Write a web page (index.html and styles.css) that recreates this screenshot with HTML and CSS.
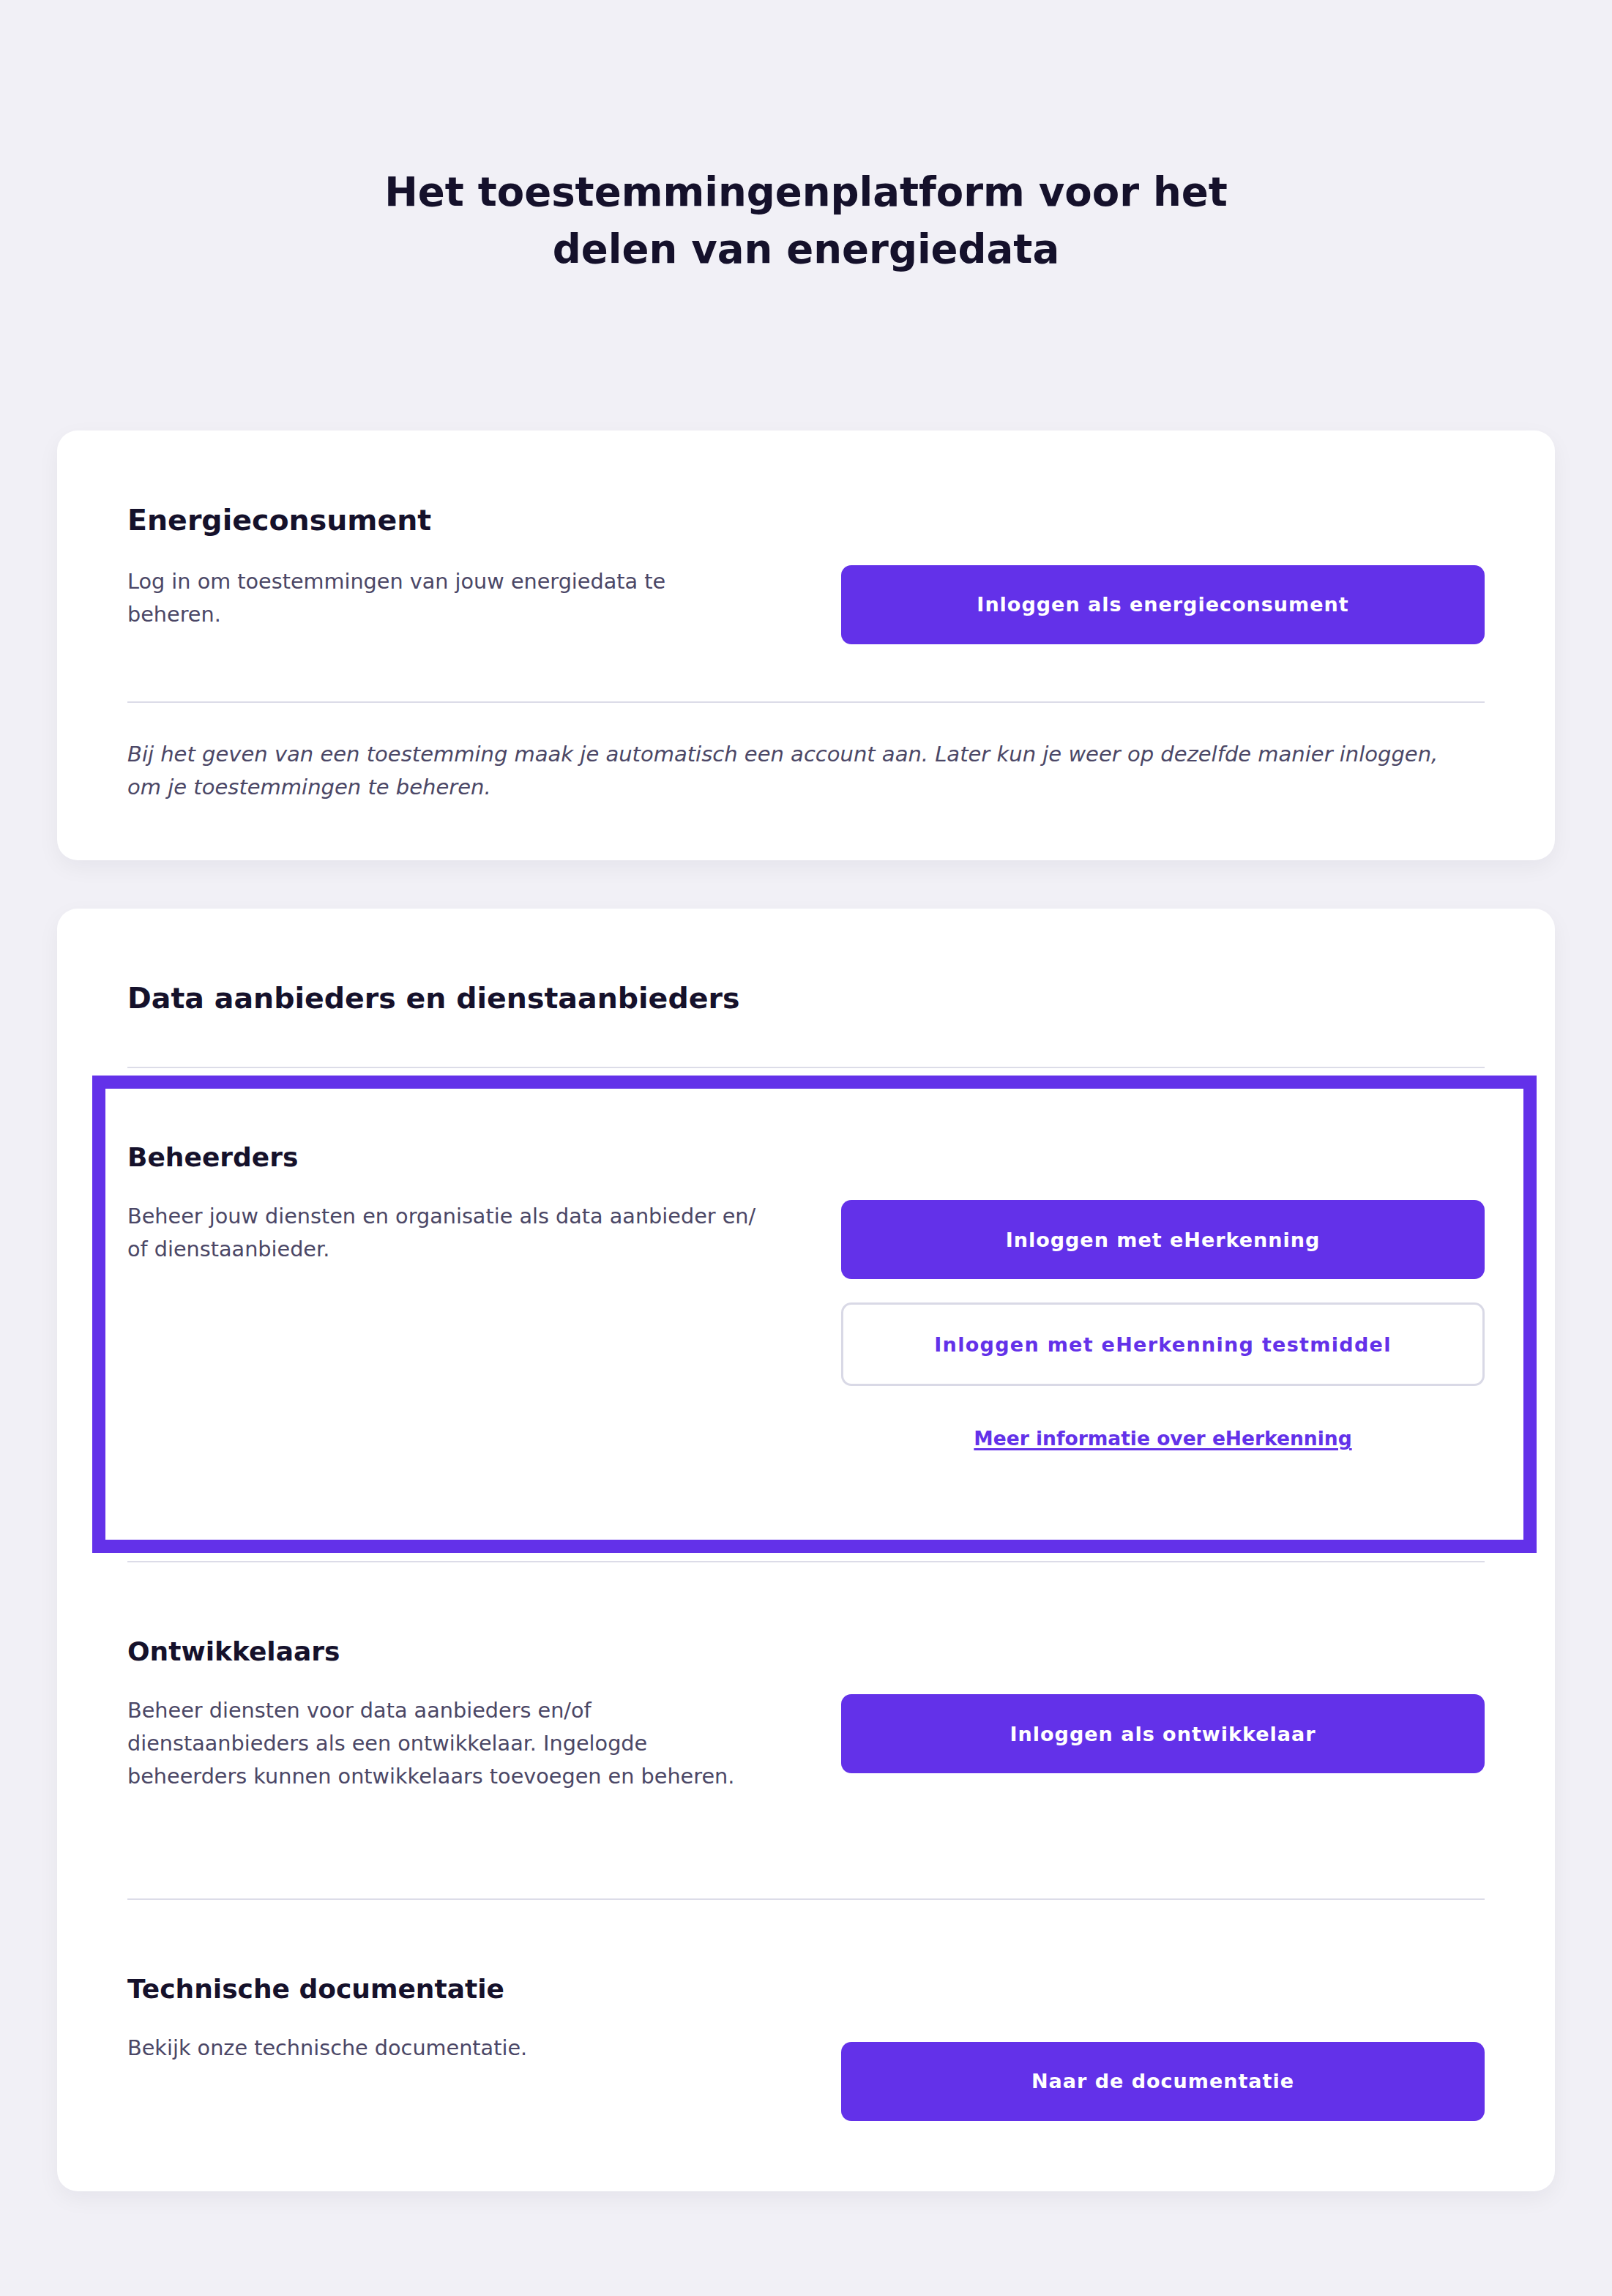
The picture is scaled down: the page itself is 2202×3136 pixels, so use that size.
FILE: index.html
```html
<!DOCTYPE html>
<html lang="nl">
<head>
    <meta charset="UTF-8">
    <meta name="viewport" content="width=device-width, initial-scale=1.0">
    <title>Toestemmingenplatform energiedata</title>
    <link rel="stylesheet" href="styles.css">
</head>
<body>
    <main class="page">
        <h1 class="page-title">Het toestemmingenplatform voor het delen van energiedata</h1>

        <section class="card card-consumer">
            <h2 class="card-title">Energieconsument</h2>
            <div class="row">
                <p class="text">Log in om toestemmingen van jouw energiedata te beheren.</p>
                <div class="actions">
                    <a href="#" class="btn btn-primary">Inloggen als energieconsument</a>
                </div>
            </div>
            <hr class="divider divider-consumer">
            <p class="note">Bij het geven van een toestemming maak je automatisch een account aan. Later kun je weer op dezelfde manier inloggen, om je toestemmingen te beheren.</p>
        </section>

        <section class="card card-providers">
            <h2 class="card-title">Data aanbieders en dienstaanbieders</h2>
            <hr class="divider divider-providers">

            <div class="block block-highlight">
                <h3 class="block-title">Beheerders</h3>
                <div class="row">
                    <p class="text">Beheer jouw diensten en organisatie als data aanbieder en/<wbr>of dienstaanbieder.</p>
                    <div class="actions">
                        <a href="#" class="btn btn-primary">Inloggen met eHerkenning</a>
                        <a href="#" class="btn btn-outline">Inloggen met eHerkenning testmiddel</a>
                        <a href="#" class="link">Meer informatie over eHerkenning</a>
                    </div>
                </div>
            </div>

            <hr class="divider">

            <div class="block block-developers">
                <h3 class="block-title">Ontwikkelaars</h3>
                <div class="row">
                    <p class="text">Beheer diensten voor data aanbieders en/of dienstaanbieders als een ontwikkelaar. Ingelogde beheerders kunnen ontwikkelaars toevoegen en beheren.</p>
                    <div class="actions">
                        <a href="#" class="btn btn-primary">Inloggen als ontwikkelaar</a>
                    </div>
                </div>
            </div>

            <hr class="divider">

            <div class="block block-docs">
                <h3 class="block-title">Technische documentatie</h3>
                <div class="row">
                    <p class="text">Bekijk onze technische documentatie.</p>
                    <div class="actions">
                        <a href="#" class="btn btn-primary">Naar de documentatie</a>
                    </div>
                </div>
            </div>
        </section>
    </main>
</body>
</html>
```

FILE: styles.css
```css
:root {
    --page-background: #f1f0f6;
    --card-background: #ffffff;
    --heading-color: #15112b;
    --text-color: #4b4766;
    --primary: #6331e9;
    --divider: #dcdce8;
    --outline-border: #d9d9e6;
}

body {
    margin: 0;
    background-color: var(--page-background);
    font-family: "DejaVu Sans", Verdana, sans-serif;
    color: var(--text-color);
}

.page {
    padding: 223px 78px 144px;
}

.page-title {
    max-width: 1240px;
    margin: 0 auto 208px;
    text-align: center;
    color: var(--heading-color);
    font-size: 54.5px;
    line-height: 78.4px;
    font-weight: 700;
}

.card {
    background-color: var(--card-background);
    border-radius: 28px;
    padding: 96px;
    box-shadow: 0 10px 30px rgba(21, 17, 43, 0.05);
}

.card-consumer {
    padding-bottom: 78px;
}

.card-providers {
    margin-top: 66px;
}

.card-title {
    margin: 0 0 36px;
    color: var(--heading-color);
    font-size: 39.5px;
    line-height: 52px;
    font-weight: 700;
}

.block-title {
    margin: 0 0 32px;
    color: var(--heading-color);
    font-size: 36px;
    line-height: 52px;
    font-weight: 700;
}

.row {
    display: grid;
    grid-template-columns: 1fr 1fr;
    column-gap: 96px;
    align-items: start;
}

.text {
    margin: 0;
    max-width: 868px;
    font-size: 28.7px;
    line-height: 44.8px;
}

.actions {
    display: flex;
    flex-direction: column;
}

.btn {
    display: flex;
    align-items: center;
    justify-content: center;
    box-sizing: border-box;
    height: 108px;
    border-radius: 14px;
    font-size: 27px;
    font-weight: 700;
    letter-spacing: 1px;
    text-decoration: none;
}

.btn-primary {
    background-color: var(--primary);
    color: #ffffff;
}

.btn-outline {
    height: 114px;
    margin-top: 32px;
    background-color: #ffffff;
    border: 3px solid var(--outline-border);
    color: var(--primary);
    letter-spacing: 1.3px;
}

.link {
    margin-top: 50px;
    align-self: center;
    color: var(--primary);
    font-size: 26.5px;
    line-height: 44.8px;
    font-weight: 700;
    text-decoration: underline;
    text-underline-offset: 4px;
    text-decoration-thickness: 3px;
}

.divider {
    margin: 0;
    border: none;
    border-top: 2px solid var(--divider);
}

.divider-consumer {
    margin: 78px 0 48px;
}

.divider-providers {
    margin-top: 68px;
}

.note {
    margin: 0;
    max-width: 1830px;
    font-size: 29px;
    line-height: 44.8px;
    font-style: italic;
}

.block {
    padding: 96px 0;
}

.block-highlight {
    margin: 10px -71px 11px -48px;
    padding: 68px 53px 115px 30px;
    border: 18px solid var(--primary);
}

.block-developers {
    padding-bottom: 144px;
}

.block-docs {
    padding-bottom: 0;
}

.block-docs .btn {
    margin-top: 14px;
}
```
